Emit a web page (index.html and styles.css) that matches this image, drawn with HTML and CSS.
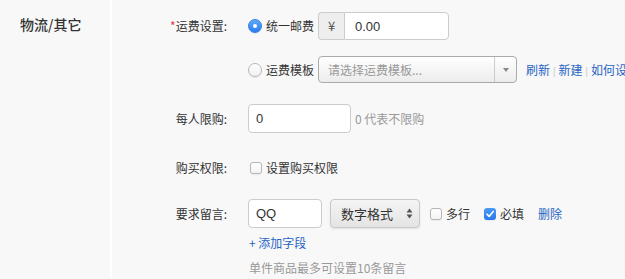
FILE: index.html
```html
<!DOCTYPE html>
<html lang="zh-CN">
<head>
    <meta charset="UTF-8">
    <title>物流/其它</title>
    <link rel="stylesheet" href="styles.css">
</head>
<body>

    <div class="section">
        <div class="section-title">物流/其它</div>

        <div class="form">
            <!-- 运费设置 -->
            <div class="row row-freight">
                <label class="label"><span class="req">*</span>运费设置:</label>
                <div class="controls">
                    <span class="radio checked"></span>
                    <span class="opt-text">统一邮费</span>
                    <div class="input-group">
                        <span class="addon">¥</span>
                        <input type="text" class="input input-price" value="0.00">
                    </div>
                </div>
            </div>

            <div class="row row-template">
                <div class="label"></div>
                <div class="controls">
                    <span class="radio"></span>
                    <span class="opt-text">运费模板</span>
                    <div class="chosen">
                        <span class="chosen-text">请选择运费模板...</span>
                        <span class="chosen-arrow"></span>
                    </div>
                    <div class="links">
                        <a href="#">刷新</a><span class="sep">|</span><a href="#">新建</a><span class="sep">|</span><a href="#">如何设置</a>
                    </div>
                </div>
            </div>

            <!-- 每人限购 -->
            <div class="row row-limit">
                <label class="label">每人限购:</label>
                <div class="controls">
                    <input type="text" class="input input-limit" value="0">
                    <span class="hint">0 代表不限购</span>
                </div>
            </div>

            <!-- 购买权限 -->
            <div class="row row-perm">
                <label class="label">购买权限:</label>
                <div class="controls">
                    <span class="checkbox"></span>
                    <span class="opt-text">设置购买权限</span>
                </div>
            </div>

            <!-- 要求留言 -->
            <div class="row row-msg">
                <label class="label">要求留言:</label>
                <div class="controls">
                    <input type="text" class="input input-field" value="QQ">
                    <div class="native-select">
                        <span>数字格式</span>
                        <svg class="updown" width="7" height="11" viewBox="0 0 7 11">
                            <path d="M3.5 0.5 L6.5 4.5 L0.5 4.5 Z" fill="#555"/>
                            <path d="M3.5 10.5 L6.5 6.5 L0.5 6.5 Z" fill="#555"/>
                        </svg>
                    </div>
                    <span class="checkbox"></span>
                    <span class="opt-text">多行</span>
                    <span class="checkbox checked">
                        <svg width="12" height="12" viewBox="0 0 12 12">
                            <path d="M3 6.2 L5.1 8.4 L9.2 3.6" fill="none" stroke="#fff" stroke-width="1.6" stroke-linecap="round" stroke-linejoin="round"/>
                        </svg>
                    </span>
                    <span class="opt-text">必填</span>
                    <a href="#" class="del">删除</a>
                </div>
            </div>

            <div class="row-extra">
                <a href="#" class="add">+ 添加字段</a>
                <p class="note">单件商品最多可设置10条留言</p>
            </div>
        </div>
    </div>

</body>
</html>
```

FILE: styles.css
```css
body {
    margin: 0;
    padding: 0;
    background: #f8f8f8;
    font-family: "Noto Sans CJK SC", "Liberation Sans", sans-serif;
    font-size: 12px;
    color: #333;
    overflow: hidden;
}

.section {
    display: flex;
    height: 279px;
}

.section-title {
    width: 90px;
    flex-shrink: 0;
    padding: 15px 0 0 20px;
    font-size: 14px;
    line-height: 18px;
    font-weight: 500;
    color: #333;
    border-right: 2px solid #fff;
}

.form {
    flex: 1;
    min-width: 0;
    padding-top: 12px;
    white-space: nowrap;
    overflow: hidden;
}

.row {
    display: flex;
    align-items: center;
}

.label {
    width: 115px;
    flex-shrink: 0;
    text-align: right;
    margin-right: 21px;
    line-height: 16px;
}

.req {
    color: #e4393c;
}

.controls {
    display: flex;
    align-items: center;
    height: 100%;
}

.row-freight { height: 28px; }
.row-template { height: 27px; margin-top: 16px; }
.row-limit { height: 29px; margin-top: 21px; }
.row-perm { height: 28px; margin-top: 21px; }
.row-msg { height: 29px; margin-top: 17px; }

.radio {
    width: 12px;
    height: 12px;
    border-radius: 50%;
    border: 1px solid #b8b8b8;
    background: linear-gradient(#fff, #f1f1f1);
    box-shadow: 0 1px 1px rgba(0, 0, 0, 0.08);
    position: relative;
    flex-shrink: 0;
}

.radio.checked {
    border-color: #2f7fe8;
    background: linear-gradient(#5fa9f8, #2c7ef0);
}

.radio.checked::after {
    content: "";
    position: absolute;
    left: 4px;
    top: 4px;
    width: 4px;
    height: 4px;
    border-radius: 50%;
    background: #fff;
}

.opt-text {
    margin-left: 4px;
    margin-right: 4px;
    line-height: 16px;
}

.input-group {
    display: flex;
    height: 28px;
}

.addon {
    width: 26px;
    box-sizing: border-box;
    border: 1px solid #ccc;
    border-right: none;
    border-radius: 4px 0 0 4px;
    background: #eee;
    text-align: center;
    line-height: 26px;
    font-size: 13px;
    color: #555;
}

.input {
    box-sizing: border-box;
    border: 1px solid #ccc;
    border-radius: 4px;
    background: #fff;
    font-family: "Liberation Sans", "Noto Sans CJK SC", sans-serif;
    font-size: 13px;
    color: #333;
    padding: 0 7px;
    outline: none;
    margin: 0;
}

.input-price {
    width: 105px;
    height: 28px;
    border-radius: 0 4px 4px 0;
    padding-left: 10px;
}

.chosen {
    display: flex;
    align-items: center;
    width: 199px;
    height: 27px;
    flex-shrink: 0;
    box-sizing: border-box;
    border: 1px solid #aaa;
    border-radius: 4px;
    background: linear-gradient(#fff, #ececec);
}

.chosen-text {
    flex: 1;
    padding-left: 9px;
    color: #999;
}

.chosen-arrow {
    width: 21px;
    height: 100%;
    border-left: 1px solid #ccc;
    position: relative;
}

.chosen-arrow::after {
    content: "";
    position: absolute;
    left: 8px;
    top: 11px;
    border-left: 3px solid transparent;
    border-right: 3px solid transparent;
    border-top: 4px solid #888;
}

.links {
    margin-left: 9px;
}

.links a,
.del,
.add {
    color: #2764c4;
    text-decoration: none;
}

.sep {
    color: #bbb;
    font-size: 9px;
    margin: 0 3px;
}

.input-limit {
    width: 103px;
    height: 29px;
}

.hint {
    margin-left: 4px;
    color: #999;
}

.checkbox {
    width: 10px;
    height: 10px;
    border: 1px solid #b5b5b5;
    border-radius: 3px;
    background: linear-gradient(#fff, #f3f3f3);
    box-shadow: 0 1px 1px rgba(0, 0, 0, 0.06);
    flex-shrink: 0;
    margin-left: 2px;
}

.checkbox.checked {
    width: 12px;
    height: 12px;
    border: none;
    background: linear-gradient(#4b9bf7, #2a78ea);
    display: flex;
}

.input-field {
    width: 74px;
    height: 29px;
}

.native-select {
    display: flex;
    align-items: center;
    justify-content: space-between;
    width: 90px;
    height: 29px;
    box-sizing: border-box;
    margin-left: 8px;
    margin-right: 8px;
    padding: 0 6px 0 10px;
    border: 1px solid #c8c8c8;
    border-radius: 4px;
    background: linear-gradient(#f4f4f4, #e4e4e4);
    box-shadow: 0 1px 2px rgba(0, 0, 0, 0.1);
    font-size: 13px;
}

.row-msg .opt-text {
    margin-right: 12px;
}

.del {
    margin-left: 2px;
}

.row-extra {
    padding-left: 137px;
}

.add {
    display: block;
    margin-top: 7px;
    line-height: 16px;
}

.note {
    margin: 9px 0 0;
    line-height: 16px;
    color: #999;
}
```
